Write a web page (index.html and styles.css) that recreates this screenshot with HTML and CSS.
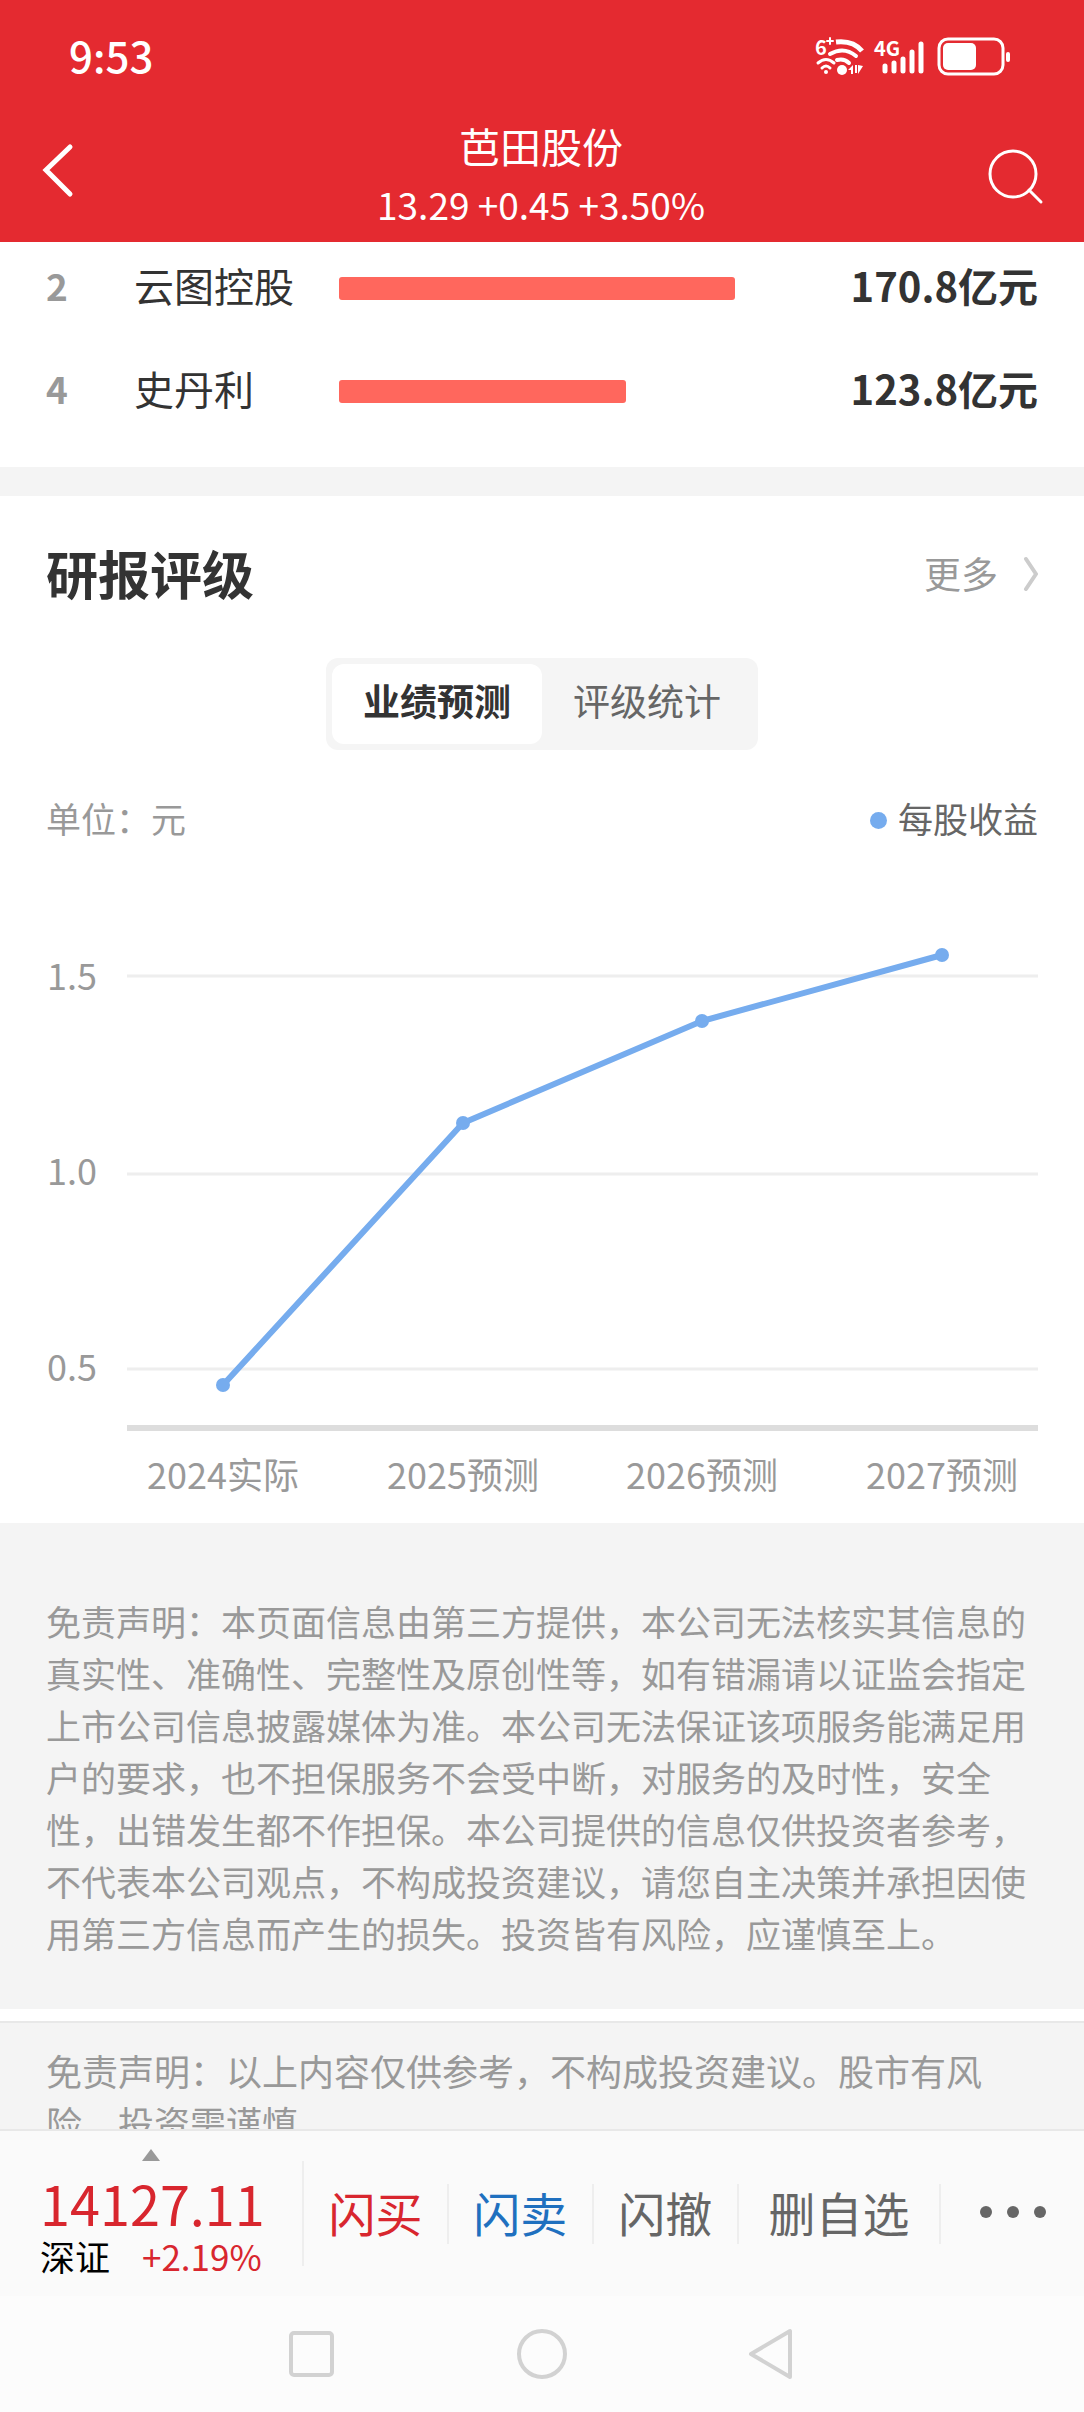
FILE: index.html
```html
<!DOCTYPE html>
<html lang="zh-CN">
<head>
    <meta charset="UTF-8">
    <meta name="viewport" content="width=device-width, initial-scale=1.0">
    <title>芭田股份</title>
    <link rel="stylesheet" href="styles.css">
</head>
<body>
    <header class="header">
        <div class="status">
            <span class="clock">9:53</span>
            <svg class="status-icons" width="196" height="44" viewBox="0 0 196 44" fill="none" stroke="#fff" stroke-linecap="round">
                <!-- wifi -->
                <text x="0" y="22" class="mini">6</text>
                <path d="M12 8h6M15 5v6" stroke-width="2"/>
                <path d="M21 9Q38 7 47 18" stroke-width="5" stroke-linecap="butt"/>
                <path d="M15 21Q29 13 41 23" stroke-width="4"/>
                <path d="M22 27Q29 25 34 30" stroke-width="4"/>
                <circle cx="27" cy="37" r="5" fill="#fff" stroke="none"/>
                <path d="M3 30Q11 23 19 30" stroke-width="3"/>
                <path d="M7 35Q11 31 15 35" stroke-width="3"/>
                <circle cx="11" cy="39" r="2" fill="#fff" stroke="none"/>
                <path d="M33 37l5-5v9h-2v-4zM40 32h2v8h-2zM43 32l5 1-5 8z" fill="#fff" stroke="none"/>
                <!-- signal -->
                <text x="59" y="23" class="mini">4G</text>
                <path d="M70 33v5M79 30v8M88 26v12M97 19v19M106 11v27" stroke-width="5"/>
                <!-- battery -->
                <rect x="124" y="6" width="64" height="35" rx="9" stroke-width="3"/>
                <rect x="128" y="10" width="33" height="27" rx="5" fill="#fff" stroke="none"/>
                <path d="M193 21v6" stroke-width="4"/>
            </svg>
        </div>
        <div class="titlebar">
            <button class="icon-btn" aria-label="返回">
                <svg width="68" height="80" viewBox="0 0 68 80" fill="none" stroke="#fff" stroke-width="5" stroke-linecap="round">
                    <path d="M40 9L16 32L40 56"/>
                </svg>
            </button>
            <div class="stock">
                <h1>芭田股份</h1>
                <p>13.29 +0.45 +3.50%</p>
            </div>
            <button class="icon-btn" aria-label="搜索">
                <svg width="60" height="80" viewBox="0 0 60 80" fill="none" stroke="#fff" stroke-width="3" stroke-linecap="round">
                    <circle cx="29" cy="36" r="23"/>
                    <path d="M45 52L57 64"/>
                </svg>
            </button>
        </div>
    </header>

    <main class="content">
        <section class="rank">
            <table>
                <tr>
                    <td class="no">2</td>
                    <td class="name">云图控股</td>
                    <td class="track"><div class="bar" style="width: 79.6%"></div></td>
                    <td class="value">170.8亿元</td>
                </tr>
                <tr>
                    <td class="no">4</td>
                    <td class="name">史丹利</td>
                    <td class="track"><div class="bar" style="width: 57.8%"></div></td>
                    <td class="value">123.8亿元</td>
                </tr>
            </table>
        </section>

        <section class="report">
            <div class="report-head">
                <h2>研报评级</h2>
                <a href="#" class="more">更多
                    <svg width="16" height="36" viewBox="0 0 16 36" fill="none" stroke="#ccc" stroke-width="4" stroke-linecap="round">
                        <path d="M4 4L14 19L4 34"/>
                    </svg>
                </a>
            </div>
            <div class="tabs">
                <button class="tab active">业绩预测</button>
                <button class="tab">评级统计</button>
            </div>
            <div class="legend">
                <span>单位：元</span>
                <span class="series">每股收益</span>
            </div>
            <svg class="chart" viewBox="0 0 1084 679">
                <g class="grid">
                    <path d="M127 132H1038M127 330H1038M127 525H1038"/>
                    <path class="axis" d="M127 584H1038"/>
                </g>
                <g class="label-y">
                    <text x="97" y="146">1.5</text>
                    <text x="97" y="341">1.0</text>
                    <text x="97" y="537">0.5</text>
                </g>
                <polyline class="line" points="223,541 463,279 702,177 942,111"/>
                <g class="points">
                    <circle cx="223" cy="541" r="7"/>
                    <circle cx="463" cy="279" r="7"/>
                    <circle cx="702" cy="177" r="7"/>
                    <circle cx="942" cy="111" r="7"/>
                </g>
                <g class="label-x">
                    <text x="223" y="645">2024实际</text>
                    <text x="463" y="645">2025预测</text>
                    <text x="702" y="645">2026预测</text>
                    <text x="942" y="645">2027预测</text>
                </g>
            </svg>
        </section>

        <p class="disclaimer">免责声明：本页面信息由第三方提供，本公司无法核实其信息的真实性、准确性、完整性及原创性等，如有错漏请以证监会指定上市公司信息披露媒体为准。本公司无法保证该项服务能满足用户的要求，也不担保服务不会受中断，对服务的及时性，安全性，出错发生都不作担保。本公司提供的信息仅供投资者参考，不代表本公司观点，不构成投资建议，请您自主决策并承担因使用第三方信息而产生的损失。投资皆有风险，应谨慎至上。</p>
        <p class="notice">免责声明：以上内容仅供参考，不构成投资建议。股市有风险，投资需谨慎。</p>
    </main>

    <footer class="footer">
        <div class="toolbar">
            <div class="index">
                <svg class="up" width="18" height="12" viewBox="0 0 18 12"><path d="M9 0L18 12H0Z" fill="#999"/></svg>
                <div class="index-value">14127.11</div>
                <div class="index-row"><span class="index-name">深证</span><span>+2.19%</span></div>
            </div>
            <button class="action buy">闪买</button>
            <button class="action sell">闪卖</button>
            <button class="action">闪撤</button>
            <button class="action wide">删自选</button>
            <button class="action" aria-label="更多操作">
                <svg width="68" height="14" viewBox="0 0 68 14" fill="#666"><circle cx="7" cy="7" r="6"/><circle cx="34" cy="7" r="6"/><circle cx="61" cy="7" r="6"/></svg>
            </button>
        </div>
        <nav class="sysnav">
            <button aria-label="最近任务">
                <svg width="52" height="52" viewBox="0 0 52 52"><rect x="5" y="5" width="41" height="42" rx="3"/></svg>
            </button>
            <button aria-label="主屏幕">
                <svg width="52" height="52" viewBox="0 0 52 52"><circle cx="26" cy="26" r="23"/></svg>
            </button>
            <button aria-label="后退">
                <svg width="52" height="52" viewBox="0 0 52 52"><path d="M44 3V49L5 26Z"/></svg>
            </button>
        </nav>
    </footer>
</body>
</html>
```
FILE: styles.css
```css
* {
    margin: 0;
    padding: 0;
    box-sizing: border-box;
}
body {
    display: flex;
    flex-direction: column;
    height: 100vh;
    overflow: hidden;
    background: #fff;
    color: #333;
    font-family: "Noto Sans CJK SC", sans-serif;
    font-size: 36px;
}
button {
    background: none;
    border: none;
    color: inherit;
    font: inherit;
    cursor: pointer;
}
svg {
    display: block;
}

/* header */
.header {
    flex: none;
    height: 242px;
    background: #e42a30;
    color: #fff;
}
.status {
    display: flex;
    justify-content: space-between;
    align-items: center;
    height: 110px;
    padding: 0 73px 2px 69px;
}
.clock {
    font-size: 42px;
    font-weight: 500;
}
.status-icons {
    margin-top: 2px;
}
.mini {
    font-size: 20px;
    font-weight: bold;
    fill: #fff;
    stroke: none;
}
.titlebar {
    display: flex;
    justify-content: space-between;
    padding: 5px 40px 0 30px;
}
.icon-btn {
    height: 126px;
}
.stock {
    text-align: center;
}
.stock h1 {
    font-size: 41px;
    font-weight: 400;
    line-height: 60px;
}
.stock p {
    font-size: 37px;
    line-height: 58px;
}

/* scrolling page */
.content {
    flex: 1;
    min-height: 0;
    overflow: hidden;
}
.rank {
    padding: 0 46px 28px;
    border-bottom: 29px solid #f4f4f4;
}
/* first row is partly scrolled under the header */
.rank table {
    width: 100%;
    margin-top: -9px;
    table-layout: fixed;
    border-collapse: collapse;
    font-size: 40px;
}
.rank td {
    height: 103px;
}
.rank .no {
    width: 88px;
    color: #999;
    font-size: 37px;
    font-weight: bold;
}
.rank .name {
    width: 205px;
}
.rank .track {
    padding-top: 8px;
}
.bar {
    height: 23px;
    background: #ff675d;
    border-radius: 3px;
}
.rank .value {
    width: 202px;
    text-align: right;
    font-weight: bold;
}
.report-head {
    display: flex;
    justify-content: space-between;
    align-items: center;
    padding: 34px 46px 42px;
    line-height: 86px;
}
.report-head h2 {
    font-size: 52px;
}
.more {
    display: flex;
    align-items: center;
    gap: 24px;
    color: #999;
    font-size: 37px;
    text-decoration: none;
}
.tabs {
    display: flex;
    width: 432px;
    margin: 0 auto;
    padding: 6px;
    background: #f5f5f5;
    border-radius: 12px;
}
.tab {
    flex: 1;
    height: 80px;
    padding-bottom: 8px;
    border-radius: 12px;
    color: #666;
    font-size: 37px;
}
.tab.active {
    background: #fff;
    color: #333;
    font-weight: bold;
}
.legend {
    display: flex;
    justify-content: space-between;
    padding: 43px 46px 1px;
    color: #999;
    font-size: 35px;
    line-height: 50px;
}
.series {
    display: flex;
    align-items: center;
    gap: 11px;
    color: #666;
}
.series::before {
    content: "";
    width: 17px;
    height: 17px;
    margin-top: 4px;
    border-radius: 50%;
    background: #76acee;
}
.chart {
    width: 100%;
    font-size: 36px;
    fill: #999;
}
.grid {
    stroke: #eee;
    stroke-width: 3;
}
.axis {
    stroke: #ddd;
    stroke-width: 6;
}
.line {
    fill: none;
    stroke: #76acee;
    stroke-width: 6;
}
.points {
    fill: #76acee;
}
.label-x {
    text-anchor: middle;
}
.label-y {
    text-anchor: end;
}
.disclaimer {
    padding: 72px 46px 50px;
    background: #f4f4f4;
    color: #999;
    font-size: 35px;
    line-height: 52px;
}
.notice {
    margin-top: 12px;
    padding: 21px 46px;
    border-top: 2px solid #e8e8e8;
    background: #f4f4f4;
    color: #999;
    font-size: 36px;
    line-height: 52px;
}

/* bottom bars */
.footer {
    flex: none;
    background: #fcfcfc;
}
.toolbar {
    display: flex;
    align-items: center;
    height: 167px;
    border-top: 2px solid #e8e8e8;
    background: #fafafa;
}
.index {
    width: 304px;
    height: 105px;
    border-right: 2px solid #eee;
    padding-left: 40px;
    color: #d8262e;
    font-size: 35px;
}
.up {
    margin: -12px 0 12px 102px;
}
.index-value {
    font-size: 54px;
    line-height: 60px;
}
.index-row {
    display: flex;
    gap: 32px;
    line-height: 46px;
}
.index-name {
    color: #000;
}
.action {
    display: flex;
    justify-content: center;
    align-items: center;
    flex: 144;
    height: 60px;
    color: #666;
    font-size: 47px;
    line-height: 54px;
    padding-bottom: 4px;
}
.action + .action {
    border-left: 2px solid #eee;
}
.action.wide {
    flex: 202;
}
.action.buy {
    color: #d8262e;
}
.action.sell {
    color: #1f70bf;
}
.sysnav {
    display: flex;
    justify-content: center;
    align-items: center;
    gap: 178px;
    height: 116px;
}
.sysnav svg {
    fill: none;
    stroke: #d2d2d2;
    stroke-width: 4;
    stroke-linejoin: round;
}
```
